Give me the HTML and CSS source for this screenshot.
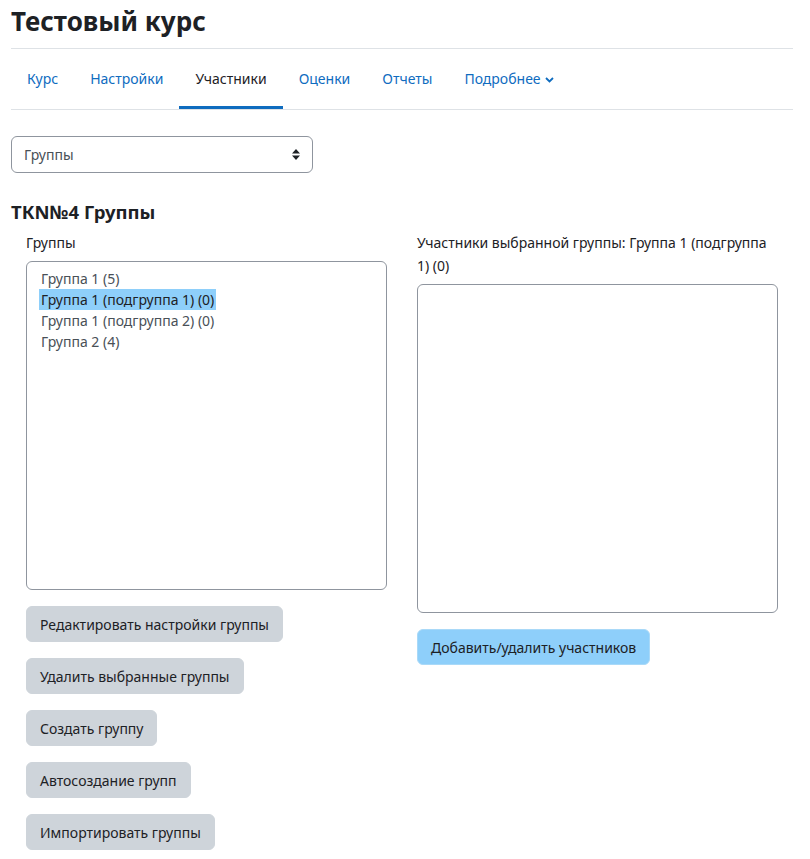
FILE: index.html
```html
<!DOCTYPE html>
<html lang="ru">
<head>
    <meta charset="UTF-8">
    <meta name="viewport" content="width=device-width, initial-scale=1.0">
    <title>Тестовый курс: Группы</title>
    <link rel="stylesheet" href="styles.css">
</head>
<body>
    <div class="page">
        <h1 class="page-title">Тестовый курс</h1>

        <nav class="secondary-nav">
            <ul>
                <li><a href="#">Курс</a></li>
                <li><a href="#">Настройки</a></li>
                <li><a href="#" class="active">Участники</a></li>
                <li><a href="#">Оценки</a></li>
                <li><a href="#">Отчеты</a></li>
                <li>
                    <a href="#" class="dropdown">Подробнее
                        <svg class="chevron" width="9" height="6" viewBox="0 0 9 6"><path d="M1 1l3.5 3.5L8 1" fill="none" stroke="currentColor" stroke-width="1.8"/></svg>
                    </a>
                </li>
            </ul>
        </nav>

        <div class="view-select">
            <span>Группы</span>
            <svg class="updown" width="8" height="11" viewBox="0 0 8 11"><path d="M4 0l4 4.5H0z M4 11L0 6.5h8z" fill="#1d2125"/></svg>
        </div>

        <h3 class="groups-heading">ТКN№4 Группы</h3>

        <div class="groups-layout">
            <div class="groups-col">
                <label class="col-label">Группы</label>
                <div class="listbox">
                    <div class="option">Группа 1 (5)</div>
                    <div class="option selected">Группа 1 (подгруппа 1) (0)</div>
                    <div class="option">Группа 1 (подгруппа 2) (0)</div>
                    <div class="option">Группа 2 (4)</div>
                </div>
                <div class="btn-stack">
                    <button class="btn btn-secondary">Редактировать настройки группы</button>
                    <button class="btn btn-secondary">Удалить выбранные группы</button>
                    <button class="btn btn-secondary">Создать группу</button>
                    <button class="btn btn-secondary">Автосоздание групп</button>
                    <button class="btn btn-secondary">Импортировать группы</button>
                </div>
            </div>
            <div class="groups-col">
                <label class="col-label">Участники выбранной группы: Группа 1 (подгруппа 1) (0)</label>
                <div class="listbox"></div>
                <div class="btn-stack">
                    <button class="btn btn-info">Добавить/удалить участников</button>
                </div>
            </div>
        </div>
    </div>
</body>
</html>
```

FILE: styles.css
```css
:root {
    --text: #1d2125;
    --muted: #495057;
    --link: #0f6cbf;
    --border: #dee2e6;
    --input-border: #8f959e;
    --btn-grey: #ced4da;
    --btn-blue: #8ecffa;
}

* {
    box-sizing: border-box;
    margin: 0;
    padding: 0;
}

body {
    font-family: "Noto Sans", "Open Sans", sans-serif;
    font-size: 14px;
    color: var(--text);
    background: #fff;
}

.page {
    padding: 0 17px 0 11px;
}

.page-title {
    font-size: 26px;
    font-weight: 700;
    line-height: 36px;
    padding-top: 3px;
    padding-bottom: 9px;
    border-bottom: 1px solid var(--border);
}

/* tabs under the course title */
.secondary-nav {
    border-bottom: 1px solid var(--border);
}

.secondary-nav ul {
    list-style: none;
    display: flex;
}

.secondary-nav a {
    display: flex;
    align-items: center;
    gap: 4px;
    padding: 19px 16px 16px;
    line-height: 22px;
    color: var(--link);
    text-decoration: none;
    border-bottom: 3px solid transparent;
}

.secondary-nav a.active {
    color: var(--text);
    border-bottom-color: var(--link);
}

.chevron {
    margin-top: 1px;
}

.view-select {
    margin-top: 26px;
    width: 302px;
    height: 37px;
    border: 1px solid var(--input-border);
    border-radius: 6px;
    display: flex;
    align-items: center;
    justify-content: space-between;
    padding: 0 12px 0 12px;
    color: var(--muted);
}

.groups-heading {
    font-size: 18.5px;
    font-weight: 700;
    line-height: 24px;
    margin-top: 27px;
    margin-bottom: 7px;
}

.groups-layout {
    display: grid;
    grid-template-columns: 391px 391px;
}

.groups-col {
    padding: 0 15px;
}

.col-label {
    display: block;
    line-height: 23px;
    margin-bottom: 7px;
}

.listbox {
    height: 329px;
    border: 1px solid var(--input-border);
    border-radius: 6px;
    padding: 6px 12px;
}

.option {
    display: table;
    line-height: 21px;
    padding: 0 2px;
    color: var(--muted);
}

.option.selected {
    background: var(--btn-blue);
    color: var(--text);
}

.btn-stack {
    display: flex;
    flex-direction: column;
    align-items: flex-start;
    gap: 16px;
    margin-top: 16px;
}

.btn {
    font-family: inherit;
    font-size: 14px;
    height: 36px;
    padding: 0 13px;
    border-radius: 6px;
    border: 1px solid transparent;
    color: var(--text);
    cursor: pointer;
}

.btn-secondary {
    background: var(--btn-grey);
    border-color: var(--btn-grey);
}

.btn-info {
    background: var(--btn-blue);
    border-color: #a9d9f8;
}
```
